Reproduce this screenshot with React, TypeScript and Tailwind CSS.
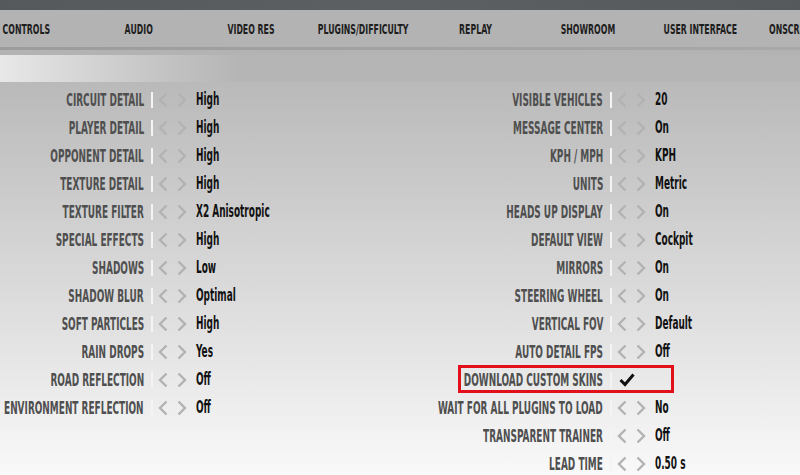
import type { ReactNode } from 'react';

const tabs = ['CONTROLS', 'AUDIO', 'VIDEO RES', 'PLUGINS/DIFFICULTY', 'REPLAY', 'SHOWROOM', 'USER INTERFACE'];

const leftRows = [
  ['CIRCUIT DETAIL', 'High'],
  ['PLAYER DETAIL', 'High'],
  ['OPPONENT DETAIL', 'High'],
  ['TEXTURE DETAIL', 'High'],
  ['TEXTURE FILTER', 'X2 Anisotropic'],
  ['SPECIAL EFFECTS', 'High'],
  ['SHADOWS', 'Low'],
  ['SHADOW BLUR', 'Optimal'],
  ['SOFT PARTICLES', 'High'],
  ['RAIN DROPS', 'Yes'],
  ['ROAD REFLECTION', 'Off'],
  ['ENVIRONMENT REFLECTION', 'Off'],
];

const rightRows = [
  ['VISIBLE VEHICLES', '20'],
  ['MESSAGE CENTER', 'On'],
  ['KPH / MPH', 'KPH'],
  ['UNITS', 'Metric'],
  ['HEADS UP DISPLAY', 'On'],
  ['DEFAULT VIEW', 'Cockpit'],
  ['MIRRORS', 'On'],
  ['STEERING WHEEL', 'On'],
  ['VERTICAL FOV', 'Default'],
  ['AUTO DETAIL FPS', 'Off'],
  ['DOWNLOAD CUSTOM SKINS', 'check'],
  ['WAIT FOR ALL PLUGINS TO LOAD', 'No'],
  ['TRANSPARENT TRAINER', 'Off'],
  ['LEAD TIME', '0.50 s'],
];

// condensed text: condensed font squeezed a bit more
const Cond = ({ children, className = '' }: { children: ReactNode; className?: string }) => (
  <span className={`inline-block whitespace-nowrap font-bold leading-none ${className}`}>{children}</span>
);

const Chevron = ({ dir }: { dir: 'l' | 'r' }) => (
  <svg width="10" height="16" viewBox="0 0 10 16" className="shrink-0 text-[#b2b2b2]">
    <polyline
      points={dir === 'l' ? '8.5,1.5 2,8 8.5,14.5' : '1.5,1.5 8,8 1.5,14.5'}
      fill="none"
      stroke="currentColor"
      strokeWidth="2.4"
    />
  </svg>
);

const Row = ({ label, value, labelW, boxed }: { label: string; value: string; labelW: string; boxed?: boolean }) => (
  <div className="relative flex h-[28px] items-center">
    <div className={`${labelW} flex shrink-0 justify-end`}>
      <Cond className="origin-right scale-x-[0.585] text-[17px] text-[#4f4f4f]">{label}</Cond>
    </div>
    <div className="ml-[7px] h-[16px] w-[2px] shrink-0 bg-[#f4f4f4]" />
    {value === 'check' ? (
      <svg width="16" height="14" viewBox="0 0 16 14" className="ml-[7px] shrink-0">
        <polyline points="1.5,7 6,11.5 14.5,1.5" fill="none" stroke="#111" strokeWidth="3" />
      </svg>
    ) : (
      <>
        <div className="ml-[5px] flex">
          <Chevron dir="l" />
        </div>
        <div className="ml-[9px] flex">
          <Chevron dir="r" />
        </div>
        <div className="ml-[9px]">
          <Cond className="origin-left scale-x-[0.585] text-[17px] text-[#111]">{value}</Cond>
        </div>
      </>
    )}
    {boxed && <div className="absolute left-[118px] top-[-1px] h-[28px] w-[216px] border-[3px] border-[#e2101b]" />}
  </div>
);

export default function App() {
  return (
    <div className="relative h-[475px] w-[800px] overflow-hidden bg-gradient-to-b from-[#b4b4b4] from-10% to-[#f9f9f9] font-['Liberation_Sans_Narrow','DejaVu_Sans_Condensed',sans-serif]">
      {/* top texture strip */}
      <div className="h-[10px] bg-gradient-to-r from-[#55595c] via-[#5c6063] to-[#55595c]" />

      {/* tab bar */}
      <div className="flex h-[37px] items-center bg-[#b3b3b3] ml-[-30px]">
        {tabs.map(t => (
          <div key={t} className="flex w-[112.3px] shrink-0 justify-center">
            <Cond className="origin-center scale-x-[0.62] text-[14px] text-[#1e1e1e]">{t}</Cond>
          </div>
        ))}
        <div className="flex shrink-0 pl-[13px]">
          <Cond className="origin-left scale-x-[0.62] text-[14px] text-[#1e1e1e]">ONSCREEN</Cond>
        </div>
      </div>
      <div className="h-[3px] bg-gradient-to-r from-[#9c9c9c] via-[#a2a2a2] to-[#a8a8a8]" />
      <div className="h-[5px] bg-[#b3b3b3]" />

      {/* sub header band */}
      <div className="h-[27px] bg-gradient-to-r from-[#e8e8e8] via-[#c4c4c4] via-20% to-[#b5b5b5] to-30%" />

      {/* settings */}
      <div className="flex pt-[4px]">
        <div className="w-[340px] shrink-0">
          {leftRows.map(([l, v]) => (
            <Row key={l} label={l} value={v} labelW="w-[144px]" />
          ))}
        </div>
        <div className="flex-1">
          {rightRows.map(([l, v]) => (
            <Row key={l} label={l} value={v} labelW="w-[263px]" boxed={v === 'check'} />
          ))}
        </div>
      </div>
    </div>
  );
}
